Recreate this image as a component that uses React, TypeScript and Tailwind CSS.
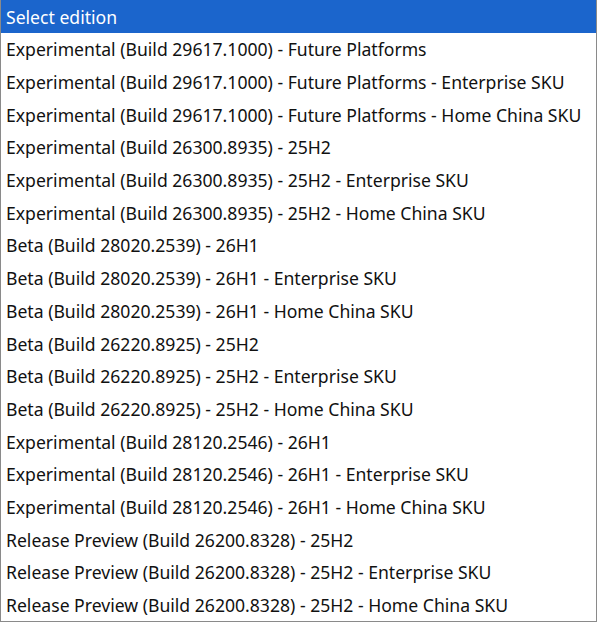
const EDITIONS = [
  'Experimental (Build 29617.1000) - Future Platforms',
  'Experimental (Build 29617.1000) - Future Platforms - Enterprise SKU',
  'Experimental (Build 29617.1000) - Future Platforms - Home China SKU',
  'Experimental (Build 26300.8935) - 25H2',
  'Experimental (Build 26300.8935) - 25H2 - Enterprise SKU',
  'Experimental (Build 26300.8935) - 25H2 - Home China SKU',
  'Beta (Build 28020.2539) - 26H1',
  'Beta (Build 28020.2539) - 26H1 - Enterprise SKU',
  'Beta (Build 28020.2539) - 26H1 - Home China SKU',
  'Beta (Build 26220.8925) - 25H2',
  'Beta (Build 26220.8925) - 25H2 - Enterprise SKU',
  'Beta (Build 26220.8925) - 25H2 - Home China SKU',
  'Experimental (Build 28120.2546) - 26H1',
  'Experimental (Build 28120.2546) - 26H1 - Enterprise SKU',
  'Experimental (Build 28120.2546) - 26H1 - Home China SKU',
  'Release Preview (Build 26200.8328) - 25H2',
  'Release Preview (Build 26200.8328) - 25H2 - Enterprise SKU',
  'Release Preview (Build 26200.8328) - 25H2 - Home China SKU',
];

export default function App() {
  return (
    <div className="w-[600px] h-[623px] bg-white">
      <ul
        className="w-[597px] border-x border-b border-[#8a8a8a] bg-white text-[17.6px] text-[#111]"
        style={{ fontFamily: '"Noto Sans", "Open Sans", sans-serif' }}
      >
        {/* highlighted placeholder */}
        <li className="h-[32.7px] flex items-center pl-[5px] pt-[1px] bg-[#1b65cc] text-white whitespace-nowrap">
          Select edition
        </li>
        {EDITIONS.map((e) => (
          <li key={e} className="h-[32.7px] flex items-center pl-[5px] pt-[1px] whitespace-nowrap">
            {e}
          </li>
        ))}
      </ul>
    </div>
  );
}
